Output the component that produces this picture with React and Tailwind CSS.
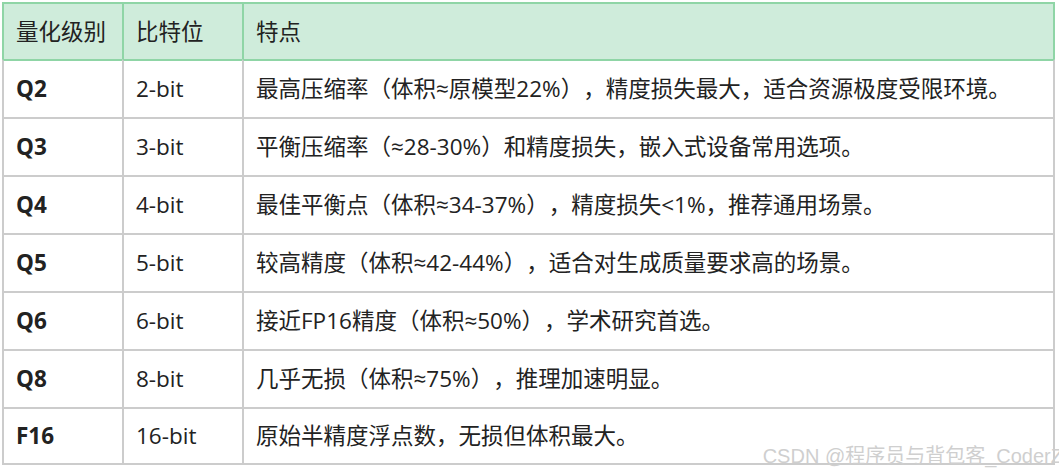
const FONT = { fontFamily: '"Open Sans", "Noto Sans CJK SC", sans-serif' }

const ROWS = [
  { q: 'Q2', bits: '2-bit', note: '最高压缩率（体积≈原模型22%），精度损失最大，适合资源极度受限环境。' },
  { q: 'Q3', bits: '3-bit', note: '平衡压缩率（≈28-30%）和精度损失，嵌入式设备常用选项。' },
  { q: 'Q4', bits: '4-bit', note: '最佳平衡点（体积≈34-37%），精度损失<1%，推荐通用场景。' },
  { q: 'Q5', bits: '5-bit', note: '较高精度（体积≈42-44%），适合对生成质量要求高的场景。' },
  { q: 'Q6', bits: '6-bit', note: '接近FP16精度（体积≈50%），学术研究首选。' },
  { q: 'Q8', bits: '8-bit', note: '几乎无损（体积≈75%），推理加速明显。' },
  { q: 'F16', bits: '16-bit', note: '原始半精度浮点数，无损但体积最大。' },
]

export default function App() {
  return (
    <div
      className="relative h-[472px] w-[1059px] overflow-hidden bg-white text-[22.5px] text-[#222] [text-spacing-trim:space-all]"
      style={FONT}
    >
      <div className="ml-[2px] mt-[2px] grid w-[1053px] grid-cols-[120px_120px_1fr]">
        {/* header */}
        <div className="flex h-[57px] items-center border-l-2 border-t-2 border-[#8fd5a6] bg-[#cfecdb] pl-3">量化级别</div>
        <div className="flex h-[57px] items-center border-l-2 border-t-2 border-[#8fd5a6] bg-[#cfecdb] pl-3">比特位</div>
        <div className="flex h-[57px] items-center border-x-2 border-t-2 border-[#8fd5a6] bg-[#cfecdb] pl-3">特点</div>

        {ROWS.map((r, i) => {
          const top = i === 0 ? 'border-t-[#8fd5a6]' : 'border-t-[#cccccc]'
          const bottom = i === ROWS.length - 1 ? 'border-b-2' : ''
          return [
            <div key={r.q + 'a'} className={`flex h-[58px] items-center border-l-2 border-t-2 border-[#cccccc] pl-3 font-bold ${top} ${bottom}`}>
              {r.q}
            </div>,
            <div key={r.q + 'b'} className={`flex h-[58px] items-center border-l-2 border-t-2 border-[#cccccc] pl-3 ${top} ${bottom}`}>
              {r.bits}
            </div>,
            <div key={r.q + 'c'} className={`flex h-[58px] items-center whitespace-nowrap border-x-2 border-t-2 border-[#cccccc] pl-3 ${top} ${bottom}`}>
              {r.note}
            </div>,
          ]
        })}
      </div>

      {/* watermark */}
      <div
        className="absolute right-[-4px] top-[441px] whitespace-nowrap text-[20px] text-[#cfcfcf]"
        style={{ fontFamily: '"Liberation Sans", "Noto Sans CJK SC", sans-serif' }}
      >
        CSDN @程序员与背包客_CoderZ
      </div>
    </div>
  )
}
